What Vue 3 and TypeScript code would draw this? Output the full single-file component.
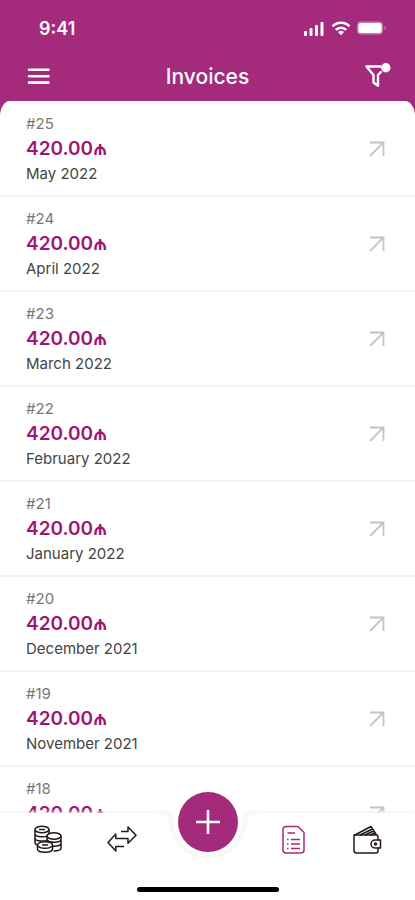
<script setup lang="ts">
import { ref } from 'vue'

interface Invoice {
  id: number
  amount: string
  period?: string
}

const invoices = ref<Invoice[]>([
  { id: 25, amount: '420.00', period: 'May 2022' },
  { id: 24, amount: '420.00', period: 'April 2022' },
  { id: 23, amount: '420.00', period: 'March 2022' },
  { id: 22, amount: '420.00', period: 'February 2022' },
  { id: 21, amount: '420.00', period: 'January 2022' },
  { id: 20, amount: '420.00', period: 'December 2021' },
  { id: 19, amount: '420.00', period: 'November 2021' },
  { id: 18, amount: '420.00' },
])
</script>

<template>
  <div class="screen">
    <header class="top">
      <div class="status">
        <span class="time">9:41</span>
        <svg class="status-icons" viewBox="0 0 84 18" width="84" height="18" fill="#fff" aria-hidden="true">
          <rect x="1" y="12" width="3" height="5" rx="1" />
          <rect x="6.500" y="9" width="3" height="8" rx="1" />
          <rect x="12" y="6" width="3" height="11" rx="1" />
          <rect x="17.500" y="3" width="3" height="14" rx="1" />
          <g fill="none" stroke="#fff" stroke-width="2.600">
            <path d="M29.500 7.300a12 12 0 0 1 17 0" />
            <path d="M32.800 10.900a7.300 7.300 0 0 1 10.400 0" />
          </g>
          <path d="M35 13a4.200 4.200 0 0 1 6 0L38 16.300z" />
          <rect x="54" y="2.500" width="26" height="13" rx="4" fill-opacity=".4" />
          <rect x="55.500" y="4" width="23" height="10" rx="2.500" />
          <path d="M81.500 7v4q1.500-.7 1.500-2T81.500 7z" fill-opacity=".4" />
        </svg>
      </div>
      <div class="bar">
        <button class="icon-button" type="button" aria-label="Menu">
          <svg viewBox="0 0 26 26" width="26" height="26" fill="none" stroke="#fff" stroke-width="2.600" stroke-linecap="round">
            <path d="M5 6.700h19.500M5 13.200h19.500M5 19.600h19.500" />
          </svg>
        </button>
        <h1>Invoices</h1>
        <button class="icon-button" type="button" aria-label="Filter">
          <svg viewBox="0 0 26 26" width="26" height="26" fill="none" stroke="#fff" stroke-width="2.400" stroke-linejoin="round" stroke-linecap="round">
            <path d="M15.500 3.500H1.500l7 8.500V19.500l4.500 3.300V12l2.800-2.800" />
            <circle cx="20.800" cy="4.800" r="4.700" fill="#fff" stroke="none" />
          </svg>
        </button>
      </div>
    </header>

    <main class="sheet">
      <ul class="list">
        <li v-for="invoice in invoices" :key="invoice.id">
          <a class="row" :href="`#invoice-${invoice.id}`">
            <span class="details">
              <span class="number">#{{ invoice.id }}</span>
              <strong class="amount">{{ invoice.amount }}₼</strong>
              <span class="period">{{ invoice.period }}</span>
            </span>
            <svg viewBox="0 0 18 18" width="18" height="18" fill="none" stroke="#c4c4c4" stroke-width="1.800" aria-hidden="true">
              <path d="M2 2.500h13.500V16M15.500 2.500L2 16" />
            </svg>
          </a>
        </li>
      </ul>
    </main>

    <footer class="dock">
      <nav class="tabs" aria-label="Main">
        <a href="#balance" aria-label="Balance">
          <svg viewBox="0 0 30 30" width="30" height="30" fill="none" stroke="#231820" stroke-width="1.500">
            <path d="M2 4.500v13c0 1.600 2 2.500 4.500 2.700M16 4.500v5M2 8.800c0 2 3 3 7 3s4-.3 5-.8M2 13.100c0 2 3 3 6.500 3s4-.2 5-.5" />
            <ellipse cx="9" cy="4.500" rx="7" ry="3.200" fill="#fff" />
            <path d="M6 4.500h6" />
            <path d="M14 11v6M28 11v12c0 1.800-3 3-7.500 3M14.200 15c1 1.600 3.500 2.200 6.800 2.200 4 0 7-1.200 7-3M20 21.200c5 .2 8-1 8-3" />
            <ellipse cx="21" cy="11" rx="7" ry="3.200" fill="#fff" />
            <path d="M4.500 20v4c0 2 3 3.200 7.500 3.200s7.500-1.200 7.500-3.200v-4" fill="#fff" />
            <ellipse cx="12" cy="20" rx="7.500" ry="3.300" fill="#fff" />
            <path d="M9 20h6" />
          </svg>
        </a>
        <a href="#transfers" aria-label="Transfers">
          <svg viewBox="0 0 30 30" width="30" height="30" fill="none" stroke="#231820" stroke-width="1.500" stroke-linejoin="round">
            <path d="M14 6.500h7V2l8 8.300-8 8v-4.800H8.800V9L1 17.500 8.800 26v-4.500H17" />
          </svg>
        </a>
        <div class="center">
          <svg class="notch" viewBox="0 0 98 58" width="98" height="58" aria-hidden="true">
            <path d="M0 0h98v2c-9 0-11 3-12 8-1 22-17 40-37 40S13 32 12 10C11 5 9 2 0 2z" fill="#fff" />
            <path d="M0 3c9 0 11 2 12 8 1 22 17 37 37 37s36-15 37-37c1-6 3-8 12-8" fill="none" stroke="#f8f8f8" stroke-width="4" />
          </svg>
          <button class="add" type="button" aria-label="Add">
            <svg viewBox="0 0 26 26" width="26" height="26" fill="none" stroke="#fff" stroke-width="2.600">
              <path d="M13 1v24M1 13h24" />
            </svg>
          </button>
        </div>
        <a href="#invoices" aria-label="Invoices" aria-current="page">
          <svg viewBox="0 0 30 30" width="30" height="30" fill="none" stroke="#a42b7b" stroke-width="1.500" stroke-linejoin="round">
            <path d="M8 1.500H20l6 6V25a3 3 0 0 1-3 3H8a3 3 0 0 1-3-3V4.500a3 3 0 0 1 3-3z" />
            <path d="M9.500 8h7.500M13 14.500h9M13 19h9M13 23.500h9M9 14.500h1.500M9 19h1.500M9 23.500h1.500" />
          </svg>
        </a>
        <a href="#wallet" aria-label="Wallet">
          <svg viewBox="0 0 30 30" width="30" height="30" fill="none" stroke="#231820" stroke-width="1.500" stroke-linejoin="round">
            <path d="M26 15.500V12a2 2 0 0 0-2-2H2v15.500A2.500 2.500 0 0 0 4.500 28H24a2 2 0 0 0 2-2v-3.500" />
            <path d="M2 10.500L19 1.500l5.500 8.500M8 10l12.500-6M13 10l8.500-4M18 10l4.500-2" />
            <path d="M28.500 15H23a4 4 0 0 0 0 8h5.500z" />
            <circle cx="23.500" cy="19" r="1" />
          </svg>
        </a>
      </nav>
      <div class="home-indicator"></div>
    </footer>
  </div>
</template>

<style>
body {
  margin: 0;
}
</style>

<style scoped>
.screen {
  display: flex;
  flex-direction: column;
  height: 100vh;
  overflow: hidden;
  background: #a42b7b;
  font-family: Inter, "Liberation Sans", sans-serif;
}

.top {
  color: #fff;
}

.status {
  display: flex;
  align-items: center;
  justify-content: space-between;
  height: 56px;
  padding: 0 28px 0 39px;
}

.time {
  font-size: 18px;
  font-weight: 600;
}

.bar {
  display: flex;
  align-items: center;
  justify-content: space-between;
  height: 40px;
  padding: 0 24px 5px;
}

h1 {
  margin: 0;
  font-size: 21px;
  font-weight: 500;
}

.icon-button {
  display: flex;
  padding: 0;
  border: 0;
  background: none;
}

.sheet {
  flex: 1;
  min-height: 0;
  overflow: hidden;
  border-radius: 10px 10px 0 0 / 15px 15px 0 0;
  background: #fff;
}

.list {
  margin: 0;
  padding: 1px 0 0;
  list-style: none;
}

.row {
  display: flex;
  box-sizing: border-box;
  height: 95px;
  align-items: center;
  justify-content: space-between;
  padding: 0 29px 0 26px;
  border-bottom: 2px solid #f3f3f3;
  color: #444;
  text-decoration: none;
}

.details {
  display: flex;
  flex-direction: column;
}

.number,
.period {
  min-height: 24px;
  font-size: 15px;
  line-height: 24px;
}

.number {
  color: #777;
}

.amount {
  color: #a01574;
  font-size: 19px;
  font-weight: 600;
  line-height: 26px;
}

.dock {
  position: relative;
  background: #fff;
}

.tabs {
  display: grid;
  grid-template-columns: 1fr 1fr 98px 1fr 1fr;
  height: 74px;
  padding: 0 11px;
  box-shadow: 0 -1px 3px #f0f0f0;
}

.tabs a {
  display: flex;
  align-items: center;
  justify-content: center;
  padding-bottom: 20px;
}

.center {
  position: relative;
  display: flex;
  justify-content: center;
}

.notch {
  position: absolute;
  top: -4px;
  left: 0;
}

.add {
  position: absolute;
  top: -21px;
  display: flex;
  align-items: center;
  justify-content: center;
  width: 60px;
  height: 60px;
  padding: 0;
  border: 0;
  border-radius: 50%;
  background: #a42b7b;
}

.home-indicator {
  width: 142px;
  height: 5px;
  margin: 0 auto 8px;
  border-radius: 3px;
  background: #000;
}
</style>
